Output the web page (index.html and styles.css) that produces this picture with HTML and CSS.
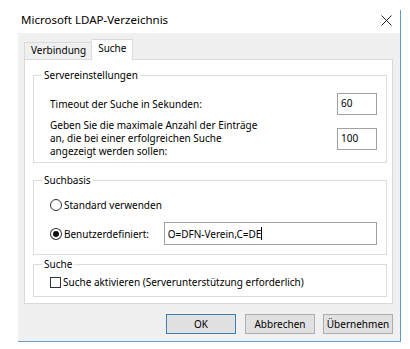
FILE: index.html
```html
<!DOCTYPE html>
<html lang="de">
<head>
  <meta charset="UTF-8" />
  <title>Microsoft LDAP-Verzeichnis</title>
  <link rel="stylesheet" href="styles.css">
</head>
<body>

  <div class="dialog">
    <div class="titlebar">
      <span class="title">Microsoft LDAP-Verzeichnis</span>
      <svg class="close" width="11" height="11" viewBox="0 0 11 11">
        <path d="M0.5 0.5 L10.5 10.5 M10.5 0.5 L0.5 10.5" stroke="#222" stroke-width="1" fill="none" />
      </svg>
    </div>

    <div class="content">
      <div class="tabs">
        <span class="tab">Verbindung</span>
        <span class="tab active">Suche</span>
      </div>

      <div class="panel">
        <div class="group server">
          <span class="group-title">Servereinstellungen</span>
          <div class="row first">
            <span class="label">Timeout der Suche in Sekunden:</span>
            <span class="field small">60</span>
          </div>
          <div class="row">
            <span class="label multi">Geben Sie die maximale Anzahl der Einträge<br>an, die bei einer erfolgreichen Suche<br>angezeigt werden sollen:</span>
            <span class="field small">100</span>
          </div>
        </div>

        <div class="group base">
          <span class="group-title">Suchbasis</span>
          <div class="option first">
            <span class="radio"></span>
            <span class="opt-label">Standard verwenden</span>
          </div>
          <div class="option">
            <span class="radio checked"></span>
            <span class="opt-label wide">Benutzerdefiniert:</span>
            <span class="field base-field">O=DFN-Verein,C=DE<span class="caret"></span></span>
          </div>
        </div>

        <div class="group search">
          <span class="group-title">Suche</span>
          <div class="option check-row">
            <span class="checkbox"></span>
            <span class="opt-label">Suche aktivieren (Serverunterstützung erforderlich)</span>
          </div>
        </div>
      </div>

      <div class="buttons">
        <span class="btn default">OK</span>
        <span class="btn">Abbrechen</span>
        <span class="btn">Übernehmen</span>
      </div>
    </div>
  </div>

</body>
</html>
```

FILE: styles.css
```css
* {
  margin: 0;
  padding: 0;
  box-sizing: border-box;
  font-family: 'Noto Sans', 'DejaVu Sans', sans-serif;
}

body {
  background: #fff;
  color: #000;
  font-size: 10px;
}

.dialog {
  margin: 10px 0 0 18px;
  width: 383px;
  border-right: 1px solid #5b9bd8;
  border-bottom: 1px solid #6a9fd3;
  box-shadow: 0 1px 0 #d6e8f7;
}

.titlebar {
  height: 23px;
  background: #fff;
  display: flex;
  justify-content: space-between;
  align-items: flex-start;
  padding: 3px 8px 0 3px;
}

.title {
  font-size: 11.5px;
  line-height: 14px;
}

.close {
  margin-top: 2px;
}

.content {
  background: #f0f0f0;
  padding: 6px 7px 7px 6px;
}

/* tabs */
.tabs {
  display: flex;
  align-items: flex-end;
  height: 20px;
}

.tab {
  height: 17px;
  line-height: 15px;
  padding: 0 5px 0 6px;
  border: 1px solid #d9d9d9;
  border-bottom: none;
  background: #f0f0f0;
}

.tab.active {
  height: 21px;
  line-height: 17px;
  padding: 0 6px 0 6px;
  margin-bottom: -1px;
  background: #fff;
  border-left: none;
  position: relative;
  z-index: 1;
}

.panel {
  height: 245px;
  background: #fff;
  border: 1px solid #d9d9d9;
  padding: 15px 5px 0 8px;
}

/* group boxes */
.group {
  border: 1px solid #dcdcdc;
  padding: 0 9px 0 16px;
}

.group-title {
  display: block;
  width: fit-content;
  margin: -8px 0 0 -8px;
  padding: 0 2px;
  background: #fff;
  line-height: 14px;
}

.server {
  height: 88px;
}

.base {
  height: 75px;
  margin-top: 17px;
}

.search {
  height: 33px;
  margin-top: 9px;
}

.row {
  display: flex;
  justify-content: space-between;
  align-items: center;
  margin-top: 4px;
}

.row.first {
  margin-top: 11px;
  height: 22px;
}

.label {
  line-height: 13px;
}

.field {
  display: block;
  height: 22px;
  line-height: 18px;
  padding: 0 3px;
  background: #fff;
  border: 1px solid #a0a0a0;
}

.field.small {
  width: 40px;
}

/* radio and checkbox options */
.option {
  display: flex;
  align-items: center;
  margin-top: 9px;
  height: 23px;
}

.option.first {
  margin-top: 10px;
  height: 16px;
}

.radio {
  width: 12px;
  height: 12px;
  border: 1px solid #333;
  border-radius: 50%;
  background: #fff;
  display: flex;
  align-items: center;
  justify-content: center;
}

.radio.checked::after {
  content: "";
  width: 6px;
  height: 6px;
  border-radius: 50%;
  background: #111;
}

.opt-label {
  margin-left: 2px;
  line-height: 14px;
}

.opt-label.wide {
  width: 100px;
}

.base-field {
  width: 214px;
  height: 23px;
  line-height: 20px;
  display: flex;
  align-items: center;
}

.caret {
  width: 1px;
  height: 13px;
  background: #000;
}

.check-row {
  margin-top: 4px;
  height: 14px;
}

.checkbox {
  width: 11px;
  height: 11px;
  border: 1px solid #333;
  background: #fff;
}

/* dialog buttons */
.buttons {
  display: flex;
  justify-content: flex-end;
  gap: 8px;
  margin-top: 10px;
}

.btn {
  width: 70px;
  height: 20px;
  line-height: 18px;
  text-align: center;
  background: #e1e1e1;
  border: 1px solid #adadad;
}

.btn.default {
  border-color: #3c7fb1;
  margin-right: 1px;
}
```
